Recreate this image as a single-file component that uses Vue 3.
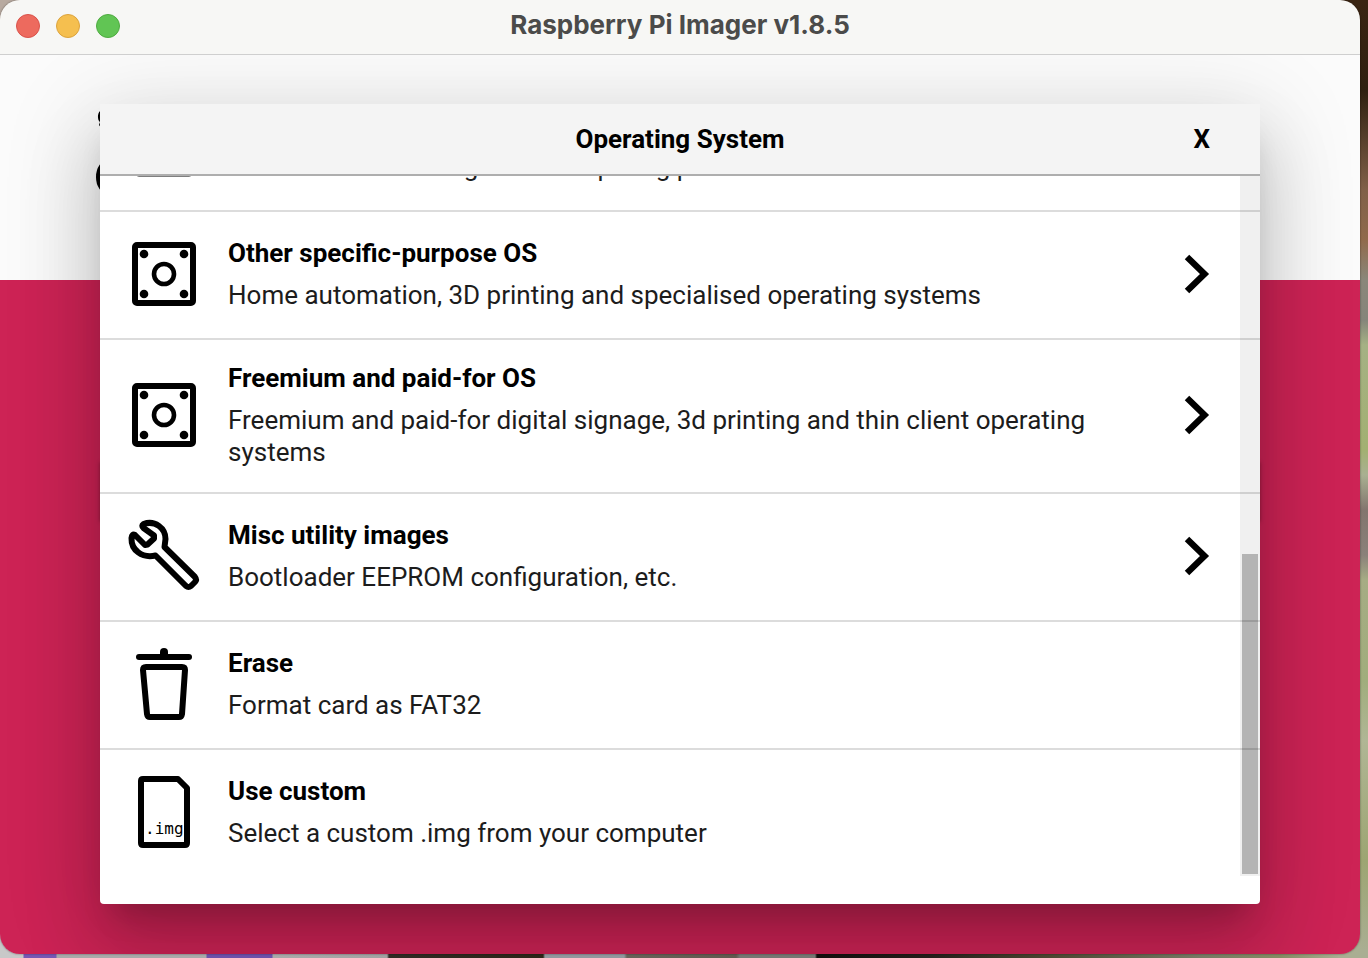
<script setup>
const systems = [
  { icon: 'emulator', title: 'Emulation and game OS', text: 'Emulators for running retro-computing platforms', more: true },
  { icon: 'board', title: 'Other specific-purpose OS', text: 'Home automation, 3D printing and specialised operating systems', more: true },
  { icon: 'board', title: 'Freemium and paid-for OS', text: 'Freemium and paid-for digital signage, 3d printing and thin client operating systems', more: true },
  { icon: 'wrench', title: 'Misc utility images', text: 'Bootloader EEPROM configuration, etc.', more: true },
  { icon: 'trash', title: 'Erase', text: 'Format card as FAT32', more: false },
  { icon: 'file', title: 'Use custom', text: 'Select a custom .img from your computer', more: false }
]
</script>

<template>
  <div class="desktop">
    <main class="window">
      <header class="titlebar">
        <div class="lights">
          <button class="light red" aria-label="Close window"></button>
          <button class="light amber" aria-label="Minimise window"></button>
          <button class="light green" aria-label="Zoom window"></button>
        </div>
        <h1>Raspberry Pi Imager v1.8.5</h1>
      </header>
      <div class="content">
        <div class="banner">
          <svg class="logo" width="24" height="96" viewBox="0 0 24 96" aria-hidden="true">
            <path d="M6 5C1 6 1 15 4 17L3 20L6 24H20V5Z" />
            <ellipse cx="12" cy="72" rx="12" ry="17" />
          </svg>
        </div>
        <div class="setup"><div class="choices"></div></div>

        <section class="dialog" role="dialog" aria-labelledby="dialog-title">
          <header class="dialog-head">
            <h2 id="dialog-title">Operating System</h2>
            <button class="close" aria-label="Close">X</button>
          </header>
          <div class="viewport">
            <ul class="list">
              <li v-for="item in systems" :key="item.title">
                <button class="row">
                  <svg class="icon" width="80" height="80" viewBox="0 0 80 80" aria-hidden="true">
                    <rect v-if="item.icon === 'emulator'" x="11" y="13" width="58" height="54.4" rx="4" fill="none" stroke="#000" stroke-width="6" />
                    <g v-else-if="item.icon === 'board'">
                      <rect x="11" y="11" width="58" height="58" rx="2" fill="none" stroke="#000" stroke-width="6" />
                      <circle cx="40" cy="40" r="10" fill="none" stroke="#000" stroke-width="4.6" />
                      <circle cx="20" cy="20" r="4.3" />
                      <circle cx="60" cy="20" r="4.3" />
                      <circle cx="20" cy="60" r="4.3" />
                      <circle cx="60" cy="60" r="4.3" />
                    </g>
                    <path v-else-if="item.icon === 'wrench'" d="M19.500 8C31 4 41.500 12 41.500 23L40.500 31L71 61Q73 63.500 71 66L67 70Q64.500 72 62 70L31.500 39.500C18 42.500 7 34 7.500 22Q8 17.500 11 19L21 29L23.500 28.500L30 22.500L30 19.500L19.500 12Q17 9.500 19.500 8Z" fill="none" stroke="#000" stroke-width="6" stroke-linejoin="round" />
                    <g v-else-if="item.icon === 'trash'" fill="none" stroke="#000" stroke-width="6" stroke-linecap="round" stroke-linejoin="round">
                      <path d="M15 13H65" />
                      <path d="M40 12V8" stroke-width="8" />
                      <path d="M22 23H58Q61 23 61 26L58 70Q57.500 73 55 73H26Q23.500 73 23 70L19 26Q19 23 22 23Z" />
                    </g>
                    <g v-else>
                      <path d="M19 7H54L63 16V71Q63 73 61 73H19Q17 73 17 71V9Q17 7 19 7Z" fill="none" stroke="#000" stroke-width="6" stroke-linejoin="round" />
                      <text x="21" y="62" class="ext">.img</text>
                    </g>
                  </svg>
                  <span class="copy">
                    <strong>{{ item.title }}</strong>
                    <span>{{ item.text }}</span>
                  </span>
                  <svg v-if="item.more" class="chevron" width="26" height="40" viewBox="0 0 26 40" aria-hidden="true">
                    <path d="M3 3L20.500 20L3 37" fill="none" stroke="#000" stroke-width="6.400" />
                  </svg>
                </button>
              </li>
            </ul>
            <div class="scrollbar"><div class="thumb"></div></div>
          </div>
        </section>
      </div>
    </main>
  </div>
</template>

<style>
body {
  margin: 0;
}
</style>

<style scoped>
.desktop {
  box-sizing: border-box;
  min-height: 100vh;
  padding: 0 8px 4px 0;
  display: flex;
  font-family: Roboto, "Liberation Sans", sans-serif;
  background:
    linear-gradient(#3a2412 0, #2f2010 90px, #806048 190px, #906a4c 240px, #8a877a 280px, #85857a 320px, #a5b184 345px, #a2b072 450px, #a9b091 475px, #82756e 510px, #8a817a 555px, #a6ac84 580px, #a0ad7c 680px, #b0b695 740px, #9ca572 860px, #a9ae92 950px) right top / 8px calc(100% - 4px) no-repeat,
    linear-gradient(#b8aaa0, #b8aaa0) left top / 20px 20px no-repeat,
    linear-gradient(#3a2412, #3a2412) right top / 30px 20px no-repeat,
    linear-gradient(#a9ae92, #a9ae92) right bottom / 30px 24px no-repeat,
    linear-gradient(#c8c8c8, #c8c8c8) left bottom / 20px 24px no-repeat,
    linear-gradient(90deg, #c8c8c8 23px, #7757b4 24px, #7757b4 56px, #aaa 57px, #aaa 206px, #6d51aa 207px, #6d51aa 272px, #aaa 273px, #a2a2a2 387px, #302b24 389px, #2d2518 543px, #92989e 545px, #92989e 624px, #686259 627px, #62594f 736px, #777773 740px, #777773 815px, #120f0d 817px, #241e1a 930px, #4c4631 1050px, #777964 1200px, #858b63 1280px, #a9ae92 1340px);
}
.window {
  flex: 1;
  display: flex;
  flex-direction: column;
  overflow: hidden;
  border-radius: 20px;
  box-shadow: 0 0 2px rgba(0, 0, 0, 0.5);
}
.titlebar {
  position: relative;
  z-index: 1;
  box-sizing: border-box;
  height: 55px;
  display: grid;
  grid-template-columns: 1fr auto 1fr;
  align-items: center;
  padding: 0 16px 3px;
  background: #f7f7f5;
  border-bottom: 1px solid #cfcfcf;
}
.titlebar h1 {
  margin: 0;
  padding-bottom: 2px;
  font: 700 26px/32px Inter, sans-serif;
  color: #4b4b4a;
}
.lights {
  display: flex;
  gap: 16px;
}
.light {
  width: 24px;
  height: 24px;
  padding: 0;
  border: 1px solid;
  border-radius: 50%;
}
.red {
  background: #ed6a5e;
  border-color: #d9534b;
}
.amber {
  background: #f5bf4f;
  border-color: #dba33d;
}
.green {
  background: #61c554;
  border-color: #4fab41;
}
.content {
  position: relative;
  flex: 1;
  display: grid;
  grid-template-rows: 1fr 3fr;
}
.banner {
  position: relative;
  background: #fbfbfb;
}
.logo {
  position: absolute;
  left: 96px;
  top: 50px;
}
.setup {
  background: #cd2355;
  padding: 180px 100px 0;
}
.choices {
  height: 60px;
  box-shadow: 0 2px 4px rgba(0, 0, 0, 0.3);
}
.dialog {
  position: absolute;
  inset: 49px 100px 50px;
  display: flex;
  flex-direction: column;
  padding-bottom: 28px;
  background: #fff;
  border-radius: 0 0 4px 4px;
  box-shadow:
    0 22px 30px -14px rgba(0, 0, 0, 0.2),
    0 48px 76px 6px rgba(0, 0, 0, 0.14),
    0 18px 92px 12px rgba(0, 0, 0, 0.12);
}
.dialog-head {
  height: 70px;
  flex: none;
  display: grid;
  grid-template-columns: 1fr auto 1fr;
  align-items: center;
  background: #f4f4f4;
  border-bottom: 2px solid #aeaeae;
}
.dialog-head h2 {
  grid-column: 2;
  margin: 0;
  font-size: 26px;
  line-height: 32px;
  font-weight: 700;
}
.close {
  justify-self: end;
  margin-right: 42px;
  padding: 0 8px;
  border: 0;
  background: none;
  font: 700 26px/32px Roboto, sans-serif;
  color: #000;
}
.viewport {
  position: relative;
  flex: 1;
  min-height: 0;
  overflow: hidden;
  display: flex;
  flex-direction: column;
  justify-content: flex-end;
}
.list {
  margin: 0;
  padding: 0;
  list-style: none;
}
.list li + li {
  border-top: 2px solid #dcdcdc;
}
.row {
  box-sizing: border-box;
  width: 100%;
  min-height: 126px;
  display: flex;
  align-items: center;
  padding: 22px 50px 24px 24px;
  border: 0;
  background: none;
  font: 400 26px/32px Roboto, "Liberation Sans", sans-serif;
  color: #1c1c1c;
  text-align: left;
}
.icon {
  flex: none;
  margin: 0 24px 0 0;
}
.ext {
  font: 16px "DejaVu Sans Mono", monospace;
}
.copy {
  flex: 1;
  display: flex;
  flex-direction: column;
  gap: 10px;
  padding-right: 40px;
}
.copy strong {
  font-weight: 700;
  color: #000;
}
.chevron {
  flex: none;
}
.scrollbar {
  position: absolute;
  inset: 0 0 0 auto;
  box-sizing: border-box;
  width: 20px;
  padding: 2px;
  display: flex;
  flex-direction: column;
  justify-content: flex-end;
  background: rgba(0, 0, 0, 0.06);
}
.thumb {
  height: 46%;
  background: rgba(0, 0, 0, 0.25);
}
</style>
